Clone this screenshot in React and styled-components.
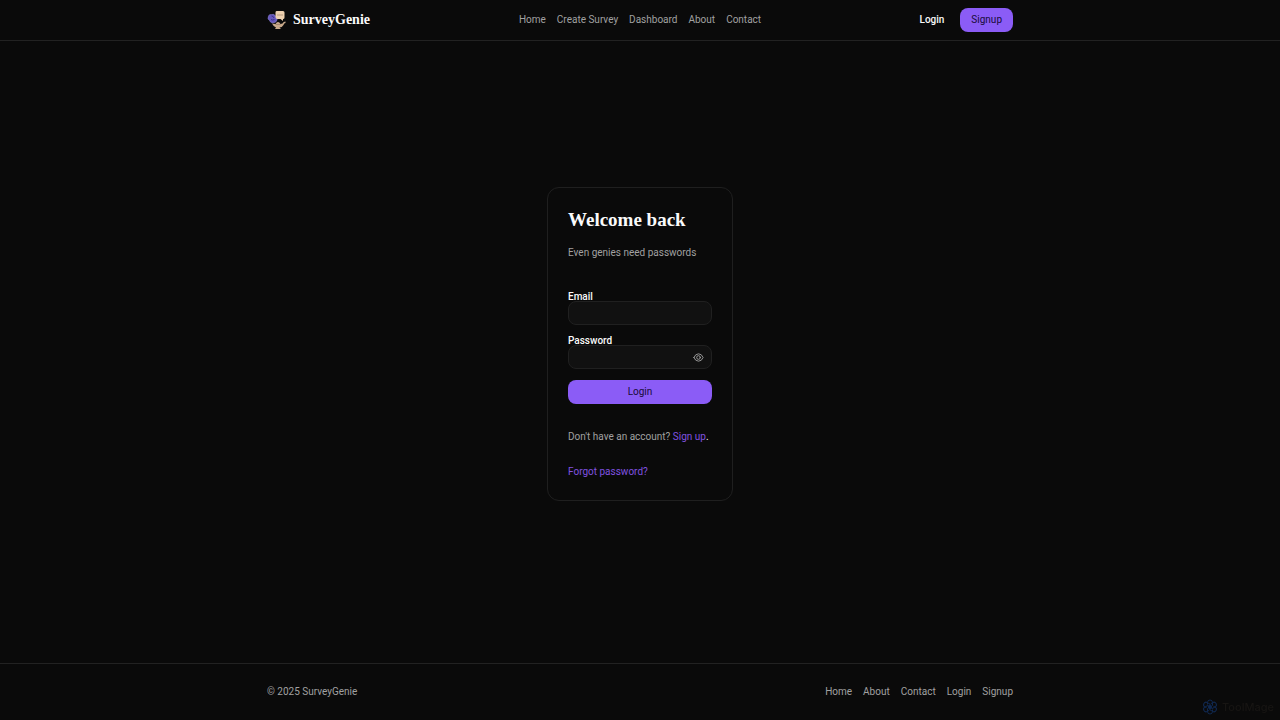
import React, { useState } from 'react';
import styled, { createGlobalStyle } from 'styled-components';

const GlobalStyle = createGlobalStyle`
  *,
  *::before,
  *::after {
    box-sizing: border-box;
  }
  body {
    margin: 0;
    background-color: #0a0a0a;
    color: #fafafa;
    font-family: Roboto, 'Open Sans', sans-serif;
    font-size: 10px;
    line-height: 16px;
  }
  a {
    text-decoration: none;
  }
  button,
  input {
    font: inherit;
  }
`;

const Page = styled.div`
  display: flex;
  flex-direction: column;
  min-height: 100vh;
`;

const Header = styled.header`
  border-bottom: 1px solid #222222;
`;

const Footer = styled.footer`
  border-top: 1px solid #222222;
`;

const Container = styled.div`
  display: flex;
  align-items: center;
  justify-content: space-between;
  max-width: 768px;
  margin: 0 auto;
  padding: 20px 11px;
`;

const HeaderContainer = styled(Container)`
  display: grid;
  grid-template-columns: 1fr auto 1fr;
  padding: 8px 11px;
`;

const Brand = styled.a`
  display: flex;
  align-items: center;
  gap: 5px;
  color: #fafafa;
  font-family: 'Liberation Serif', serif;
  font-size: 14px;
  font-weight: 700;
`;

const Links = styled.nav`
  display: flex;
  gap: 11px;
`;

const NavLink = styled.a`
  color: #a1a1a1;
`;

const Actions = styled.div`
  display: flex;
  align-items: center;
  justify-content: flex-end;
  gap: 16px;
`;

const LoginLink = styled.a`
  color: #fafafa;
  font-weight: 500;
`;

const Button = styled.button`
  height: 24px;
  padding: 0 11px;
  border: 0;
  border-radius: 8px;
  background-color: #8b5cf6;
  color: #180b38;
  cursor: pointer;
`;

const Main = styled.main`
  display: flex;
  flex: 1;
  align-items: center;
  justify-content: center;
  padding-bottom: 16px;
`;

const Card = styled.section`
  min-width: 186px;
  padding: 21px 20px 20px;
  border: 1px solid #1f1f1f;
  border-radius: 12px;
`;

const Title = styled.h1`
  margin: 0 0 15px;
  font-family: 'Liberation Serif', serif;
  font-size: 19px;
  font-weight: 700;
  line-height: 21px;
`;

const Text = styled.p`
  margin: 0;
  color: #a1a1a1;
`;

const Form = styled.form`
  display: flex;
  flex-direction: column;
  gap: 11px;
  margin: 31px 0 25px;
`;

const Field = styled.div`
  display: flex;
  flex-direction: column;
`;

const Label = styled.label`
  font-weight: 500;
  line-height: 9px;
`;

const InputBox = styled.div`
  display: flex;
  align-items: center;
  height: 24px;
  padding: 0 7px;
  border: 1px solid #202020;
  border-radius: 8px;
  background-color: #111111;
`;

const Input = styled.input`
  flex: 1;
  width: 0;
  padding: 0;
  border: 0;
  outline: 0;
  background: transparent;
  color: #fafafa;
`;

const IconButton = styled.button`
  display: flex;
  padding: 0;
  border: 0;
  background: transparent;
  color: #a1a1a1;
  cursor: pointer;
`;

const Notes = styled.div`
  display: flex;
  flex-direction: column;
  gap: 19px;
`;

const AccentLink = styled.a`
  color: #8152e0;
`;

const Period = styled.span`
  color: #fafafa;
`;

const Badge = styled.div`
  position: fixed;
  right: 6px;
  bottom: 5px;
  display: flex;
  align-items: center;
  gap: 4px;
  color: #171513;
  font-family: Inter, sans-serif;
  font-size: 11px;
  font-weight: 500;
`;

const Logo = () => (
  <svg width="21" height="21" viewBox="0 0 42 42" aria-hidden="true">
    <path
      d="M3 12q1-4 6-3 6-2 8 3 5 3 3 8-1 6-10 6-4-2-5-5-5-3-2-9z"
      fill="#6759bd"
      stroke="#8d82d4"
      strokeWidth="1"
    />
    <path d="M9 12q4 0 5 4M8 19q3 2 7 0" fill="none" stroke="#3d3288" strokeWidth="2" />
    <path
      d="M19 2h13q3 0 3 3v10q0 3-3 3v4l-5-4h-6q-4 0-4-4V5q0-3 2-3z"
      fill="#ecd0ae"
    />
    <path d="M21 10h2M25 10h2M29 10h2" stroke="#80634f" strokeWidth="2" />
    <path
      d="M10 27l7 1q2-4 5-4t5 4l4-1q2-4 6-4v3q-3 0-4 4-3 5-8 5l3 3H16l2-3q-6-3-8-8z"
      fill="#c9aa8b"
    />
    <path d="M17 29h10" stroke="#80634f" strokeWidth="1" />
  </svg>
);

const EyeIcon = () => (
  <svg
    width="11"
    height="11"
    viewBox="0 0 24 24"
    fill="none"
    stroke="currentColor"
    strokeWidth="2"
    strokeLinecap="round"
    strokeLinejoin="round"
    aria-hidden="true"
  >
    <path d="M2 12q3-8 10-8t10 8q-3 8-10 8T2 12z" />
    <circle cx="12" cy="12" r="4" />
  </svg>
);

const KnotIcon = () => (
  <svg
    width="16"
    height="16"
    viewBox="0 0 32 32"
    fill="none"
    stroke="#10284f"
    strokeWidth="2"
    aria-hidden="true"
  >
    {[0, 60, 120, 180, 240, 300].map((angle) => (
      <path
        key={angle}
        d="M11 11V7q0-5 5-5t5 5v5q0 3-5 3"
        transform={`rotate(${angle} 16 16)`}
      />
    ))}
    <circle cx="16" cy="16" r="3" fill="#10284f" />
  </svg>
);

const headerLinks = ['Home', 'Create Survey', 'Dashboard', 'About', 'Contact'];
const footerLinks = ['Home', 'About', 'Contact', 'Login', 'Signup'];

const LinkList = ({ items, label }) => (
  <Links aria-label={label}>
    {items.map((item) => (
      <NavLink key={item} href="#">
        {item}
      </NavLink>
    ))}
  </Links>
);

const LoginForm = () => {
  const [visible, setVisible] = useState(false);

  return (
    <Form onSubmit={(e) => e.preventDefault()}>
      <Field>
        <Label htmlFor="email">Email</Label>
        <InputBox>
          <Input id="email" type="email" />
        </InputBox>
      </Field>
      <Field>
        <Label htmlFor="password">Password</Label>
        <InputBox>
          <Input id="password" type={visible ? 'text' : 'password'} />
          <IconButton
            type="button"
            aria-label="Toggle password visibility"
            onClick={() => setVisible(!visible)}
          >
            <EyeIcon />
          </IconButton>
        </InputBox>
      </Field>
      <Button type="submit">Login</Button>
    </Form>
  );
};

const App = () => (
  <Page>
    <GlobalStyle />
    <Header>
      <HeaderContainer>
        <Brand href="#">
          <Logo />
          SurveyGenie
        </Brand>
        <LinkList items={headerLinks} label="Main" />
        <Actions>
          <LoginLink href="#">Login</LoginLink>
          <Button type="button">Signup</Button>
        </Actions>
      </HeaderContainer>
    </Header>
    <Main>
      <Card>
        <Title>Welcome back</Title>
        <Text>Even genies need passwords</Text>
        <LoginForm />
        <Notes>
          <Text>
            Don&apos;t have an account? <AccentLink href="#">Sign up</AccentLink>
            <Period>.</Period>
          </Text>
          <Text>
            <AccentLink href="#">Forgot password?</AccentLink>
          </Text>
        </Notes>
      </Card>
    </Main>
    <Footer>
      <Container>
        <Text>© 2025 SurveyGenie</Text>
        <LinkList items={footerLinks} label="Footer" />
      </Container>
    </Footer>
    <Badge>
      <KnotIcon />
      ToolMage
    </Badge>
  </Page>
);

export default App;
